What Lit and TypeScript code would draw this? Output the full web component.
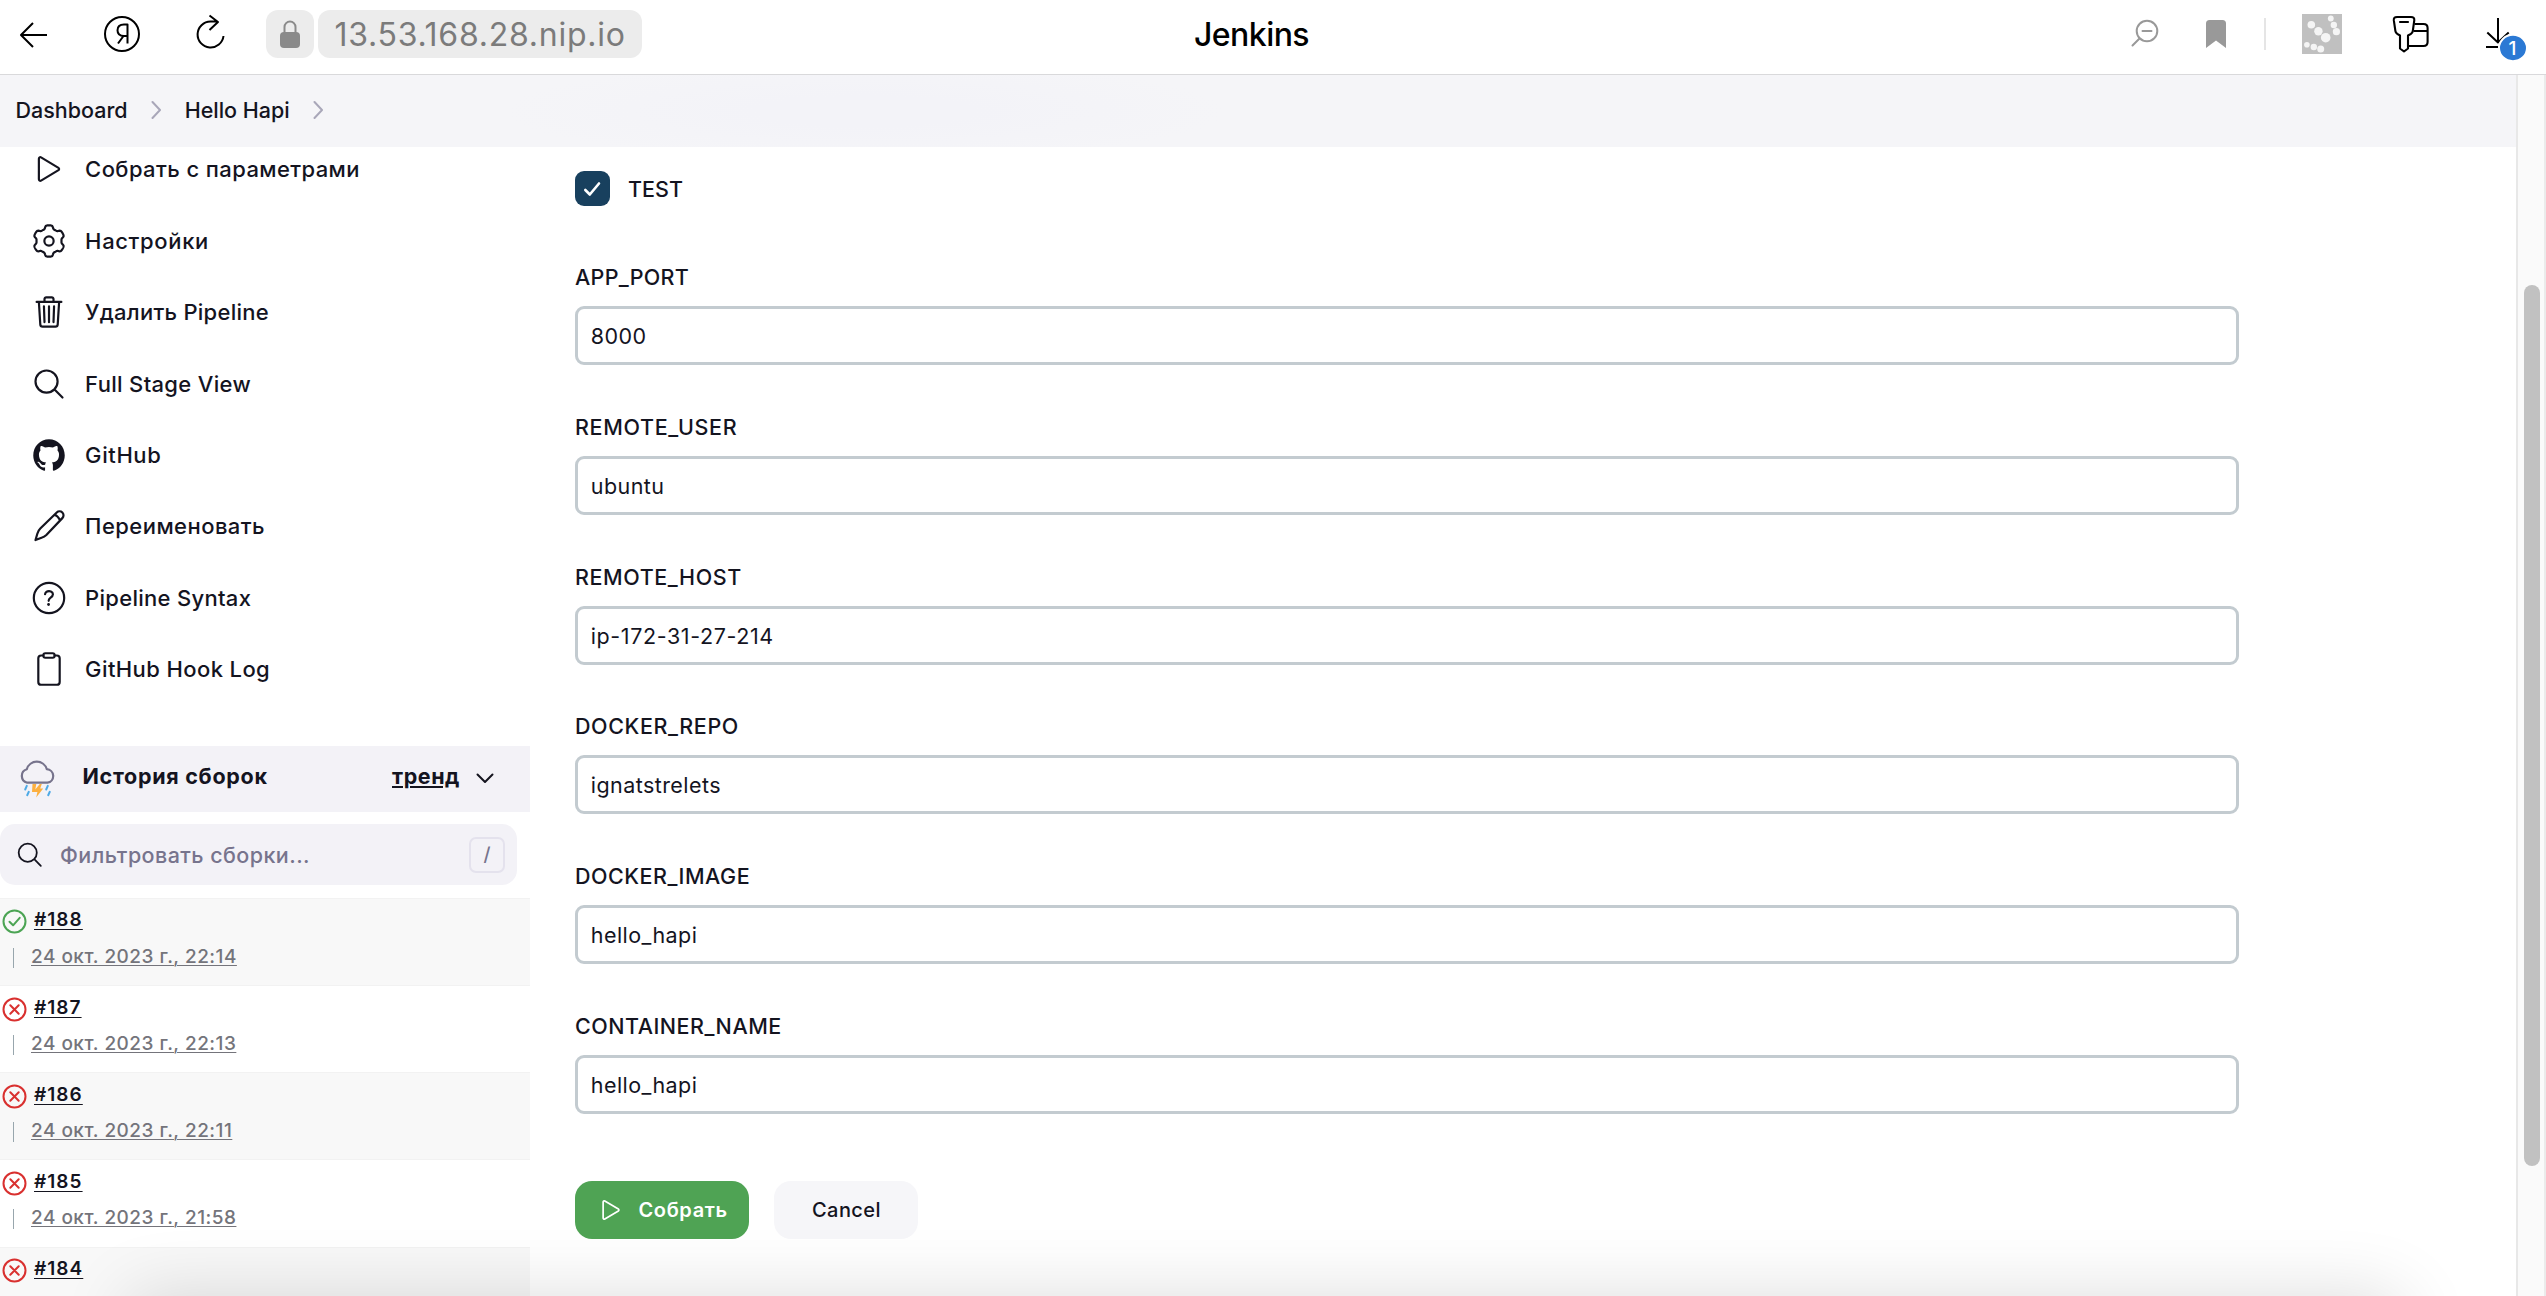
import { LitElement, html, css, svg, nothing, TemplateResult } from "lit";
import { customElement, property } from "lit/decorators.js";

/* ---------- icons ---------- */

/** Closed outline of a gear with six soft teeth. */
const gearOutline = (cx: number, cy: number, base: number, tooth: number): string => {
  const steps = 180;
  const points: string[] = [];
  for (let i = 0; i < steps; i++) {
    const a = (i / steps) * Math.PI * 2 - Math.PI / 2;
    const wave = Math.tanh(2.4 * Math.cos(6 * (a + Math.PI / 2)) + 0.3);
    const r = base + tooth * wave;
    points.push(`${(cx + r * Math.cos(a)).toFixed(2)} ${(cy + r * Math.sin(a)).toFixed(2)}`);
  }
  return `M${points.join("L")}Z`;
};

const playPath =
  "M112 111v290c0 17.44 17 28.52 31 20.16l247.9-148.37c12.12-7.25 12.12-26.33 0-33.58L143 90.84c-14-8.36-31 2.72-31 20.16z";

const ICONS: Record<string, TemplateResult> = {
  play: svg`<path d=${playPath} />`,
  gear: svg`<path d=${gearOutline(256, 256, 200, 23)} /><circle cx="256" cy="256" r="66" />`,
  trash: svg`<path d="M112 112l20 320c.95 18.49 14.4 32 32 32h184c17.67 0 30.87-13.51 32-32l20-320M80 112h352M192 112V72a23.93 23.93 0 0124-24h80a23.93 23.93 0 0124 24v40M256 176v224M184 176l8 224M328 176l-8 224" />`,
  search: svg`<path d="M221.09 64a157.09 157.09 0 10157.09 157.09A157.1 157.1 0 00221.09 64zM338.29 338.29L448 448" />`,
  github: svg`<path fill="currentColor" stroke="none" d="M256 32C132.3 32 32 134.9 32 261.7c0 101.5 64.2 187.5 153.2 217.9a17.56 17.56 0 003.8.4c8.3 0 11.5-6.1 11.5-11.4 0-5.5-.2-19.9-.3-39.1a102.4 102.4 0 01-22.6 2.7c-43.1 0-52.9-33.5-52.9-33.5-10.2-26.5-24.9-33.6-24.9-33.6-19.5-13.7-.1-14.1 1.4-14.1h.1c22.5 2 34.3 23.8 34.3 23.8 11.2 19.6 26.2 25.1 39.6 25.1a63 63 0 0025.6-6c2-14.8 7.8-24.9 14.2-30.7-49.7-5.8-102-25.5-102-113.5 0-25.1 8.7-45.6 23-61.6-2.3-5.8-10-29.2 2.2-60.8a18.64 18.64 0 015-.5c8.1 0 26.4 3.1 56.6 24.1a208.21 208.21 0 01112.2 0c30.2-21 48.5-24.1 56.6-24.1a18.64 18.64 0 015 .5c12.2 31.6 4.5 55 2.2 60.8 14.3 16.1 23 36.6 23 61.6 0 88.2-52.4 107.6-102.3 113.3 8 7.1 15.2 21.1 15.2 42.5 0 30.7-.3 55.5-.3 63 0 5.4 3.1 11.5 11.4 11.5a19.35 19.35 0 004-.4C415.9 449.2 480 363.1 480 261.7 480 134.9 379.7 32 256 32z" />`,
  pencil: svg`<path d="M64 456L90 366Q102 322 132 292L366 64a56 56 0 0180 80L218 384Q190 412 150 424ZM336 96Q384 112 414 174" />`,
  help: svg`<circle cx="256" cy="256" r="216" /><path d="M200 202.29s.84-17.5 19.57-32.57C230.68 160.77 244 158.18 256 158c10.93-.14 20.69 1.67 26.53 4.45 10 4.76 29.47 16.38 29.47 41.09 0 26-17 37.81-36.37 50.8S251 281.43 251 296" /><circle cx="250" cy="348" r="20" fill="currentColor" stroke="none" />`,
  clipboard: svg`<path d="M336 64h32a40 40 0 0140 40v336a40 40 0 01-40 40H144a40 40 0 01-40-40V104a40 40 0 0140-40h32" /><rect x="176" y="32" width="160" height="64" rx="28" />`,
};

@customElement("line-icon")
export class LineIcon extends LitElement {
  @property() name = "play";
  static styles = css`
    :host { display: block; width: 36px; height: 36px; flex: none; }
    svg { display: block; width: 100%; height: 100%; overflow: visible; }
  `;
  render() {
    return html`<svg viewBox="0 0 512 512" fill="none" stroke="currentColor" stroke-width="31"
      stroke-linecap="round" stroke-linejoin="round">${ICONS[this.name]}</svg>`;
  }
}

/* ---------- browser toolbar ---------- */

@customElement("browser-bar")
export class BrowserBar extends LitElement {
  static styles = css`
    :host { display: block; background: #fff; border-bottom: 1px solid #d9d9db; }
    .bar { display: flex; align-items: center; height: 74px; box-sizing: border-box; padding-bottom: 6px; }
    svg { display: block; flex: none; fill: none; stroke: #000; stroke-width: 2; stroke-linecap: round; stroke-linejoin: round; }
    .left { display: flex; align-items: center; width: 1194px; padding-left: 18px; box-sizing: border-box; }
    .back { width: 32px; height: 32px; margin-right: 52px; }
    .ya { width: 40px; height: 40px; margin-right: 50px; }
    .reload { width: 36px; height: 40px; margin-right: 38px; }
    .lock, .url { background: #ececec; border-radius: 12px; height: 48px; display: flex; align-items: center; justify-content: center; }
    .lock { width: 48px; margin-right: 4px; }
    .lock svg { width: 22px; height: 28px; stroke: #8a8a8a; margin-bottom: 1px; }
    .lock .fill { fill: #8a8a8a; stroke: none; }
    .url { width: 324px; font-size: 32px; letter-spacing: 0.74px; color: #7b7b7b; box-sizing: border-box; padding: 1px 0 0 0; }
    .title { flex: 1; font-size: 32px; letter-spacing: -0.55px; font-weight: 450; color: #000; padding-top: 1px; }
    .right { display: flex; align-items: center; padding-right: 16px; }
    .grey { stroke: #999; }
    .zoom { width: 28px; height: 30px; margin-right: 47px; }
    .mark { width: 20px; height: 28px; margin-right: 38px; fill: #999; stroke: none; }
    .sep { width: 2px; height: 32px; background: #e5e5e5; margin-right: 36px; }
    .tile { width: 40px; height: 40px; margin-right: 50px; stroke: none; background: #c0c0c0; fill: #f5f5f5; }
    .key { width: 38px; height: 40px; margin-right: 54px; stroke-width: 2.1; stroke-linecap: butt; }
    .down { width: 46px; height: 52px; margin-bottom: -8px; }
    .badge { fill: #2b79d4; stroke: #fff; }
    .count { fill: #fff; stroke: none; font: 500 19px Inter, sans-serif; text-anchor: middle; }
  `;
  render() {
    return html`<div class="bar">
      <div class="left">
        <svg class="back" viewBox="0 0 32 32"><path d="M29 17H3.500M15 5L3 17l12 12" stroke-linecap="butt" /></svg>
        <svg class="ya" viewBox="0 0 40 40"><circle cx="20" cy="20" r="17" />
          <path stroke-linecap="butt" stroke-width="2" d="M25.500 29.500V10.500h-3.500c-4 0-6.500 2-6.500 5.800 0 3.700 2.600 5.700 6.500 5.700h3.500M21.500 22l-5.500 7.500" /></svg>
        <svg class="reload" viewBox="0 0 36 40"><path stroke-linecap="butt" d="M31.500 22a13 13 0 1 1-13-14.500h7M17.500 1.500L26 8l-8.500 8" /></svg>
        <div class="lock"><svg viewBox="0 0 22 28"><rect class="fill" x="1" y="12" width="20" height="16" rx="4" /><path d="M5.500 13V7a5.500 5.500 0 0 1 11 0v6" /></svg></div>
        <div class="url">13.53.168.28.nip.io</div>
      </div>
      <div class="title">Jenkins</div>
      <div class="right">
        <svg class="zoom grey" viewBox="0 0 28 30"><circle cx="16" cy="12" r="10.300" /><path d="M11.500 12h9M8.500 19.500L1.500 26.500" /></svg>
        <svg class="mark" viewBox="0 0 20 28"><path d="M3.500 0h13Q20 0 20 3.500V28L10 20.500 0 28V3.500Q0 0 3.500 0z" /></svg>
        <div class="sep"></div>
        <svg class="tile" viewBox="0 0 40 40">
          <circle cx="9.300" cy="10.700" r="3.800" /><circle cx="16.400" cy="17.200" r="4.200" /><circle cx="23.700" cy="23.700" r="4.800" />
          <circle cx="28.800" cy="4.500" r="2.900" /><circle cx="31.800" cy="11" r="3.200" /><circle cx="34.400" cy="17.700" r="3.600" />
          <circle cx="4.900" cy="30.700" r="2.800" /><circle cx="11.800" cy="33" r="3.200" /><circle cx="18.700" cy="34.900" r="3.500" />
        </svg>
        <svg class="key" viewBox="0 0 38 40">
          <path d="M5 3H19Q22.500 3 22.300 6.200L20.800 17Q20.500 19 19 19.800L16 21.500V34.500L12 37.500 8 34.500V21.500L5.200 19.800Q3.700 19 3.400 17L1.800 6.200Q1.500 3 5 3zM7.200 8h9.600" />
          <path d="M22.500 10H31.500Q35.600 10 35.600 14V28Q35.600 32 31.500 32H17M21.500 17H35.600" />
        </svg>
        <svg class="down" viewBox="0 0 46 52"><path stroke-linecap="butt" d="M14 6V30M3.300 20.500L14 30.500 24.700 20.500M2 35H14" />
          <ellipse class="badge" cx="29" cy="36" rx="14" ry="13.200" /><text class="count" x="28.500" y="42.500">1</text></svg>
      </div>
    </div>`;
  }
}

/* ---------- sidebar ---------- */

interface Task { icon: string; label: string; tracking: number; }
const TASKS: Task[] = [
  { icon: "play", label: "Собрать с параметрами", tracking: 0.4 },
  { icon: "gear", label: "Настройки", tracking: 0.65 },
  { icon: "trash", label: "Удалить Pipeline", tracking: 0.26 },
  { icon: "search", label: "Full Stage View", tracking: 0.32 },
  { icon: "github", label: "GitHub", tracking: 0.6 },
  { icon: "pencil", label: "Переименовать", tracking: 0.45 },
  { icon: "help", label: "Pipeline Syntax", tracking: 0.29 },
  { icon: "clipboard", label: "GitHub Hook Log", tracking: 0.4 },
];

interface Build { id: string; date?: string; ok: boolean; }
const BUILDS: Build[] = [
  { id: "#188", date: "24 окт. 2023 г., 22:14", ok: true },
  { id: "#187", date: "24 окт. 2023 г., 22:13", ok: false },
  { id: "#186", date: "24 окт. 2023 г., 22:11", ok: false },
  { id: "#185", date: "24 окт. 2023 г., 21:58", ok: false },
  { id: "#184", ok: false },
];

@customElement("job-sidebar")
export class JobSidebar extends LitElement {
  static styles = css`
    :host { display: block; width: 530px; flex: none; }
    .tasks { display: flex; flex-direction: column; margin-top: -13.300px; }
    .task { display: flex; align-items: center; height: 71.400px; padding-left: 30.600px; gap: 18.500px; font-size: 22px; font-weight: 500; white-space: nowrap; }
    .head { display: flex; align-items: center; height: 66px; margin-top: 41px; padding: 0 36px 0 18px; background: #f3f2f7; box-sizing: border-box; font-size: 21.500px; font-weight: 700; }
    .weather { width: 38px; height: 42px; margin-right: 26.500px; flex: none; }
    .name { flex: 1; letter-spacing: 0.7px; padding-bottom: 5px; }
    .trend { letter-spacing: 0.55px; text-decoration: underline; text-decoration-thickness: 2px; text-underline-offset: 2px; padding-bottom: 5px; margin-right: 16px; }
    .chev { width: 18px; height: 12px; margin-bottom: 1px; }
    .filter { display: flex; align-items: center; width: 517px; height: 61px; margin-top: 12px; box-sizing: border-box; padding: 1px 12px 0 15px; border-radius: 15px; background: #f3f2f7; }
    .filter line-icon { width: 29.500px; height: 29.500px; margin-right: 15.500px; }
    .hint { flex: 1; font-size: 21.500px; font-weight: 500; letter-spacing: 0.43px; color: #77748d; }
    .slash { width: 36px; height: 36px; box-sizing: border-box; border: 2px solid #e4e2ed; border-radius: 7px; display: flex; align-items: center; justify-content: center; color: #77748d; font-size: 19px; font-weight: 500; }
    .builds { margin-top: 13px; }
    .build { height: 87.200px; box-sizing: border-box; border-top: 1px solid #f2f2f2; padding: 8px 0 0 2px; }
    .build:nth-child(odd) { background: #f8f8f8; }
    .line { display: flex; align-items: center; height: 28px; }
    .status { width: 25px; height: 25px; margin: 2px 7px 0 0; }
    .ok { color: #4ca454; }
    .bad { color: #d9302f; }
    .id { font-size: 19px; font-weight: 600; letter-spacing: 1.050px; text-decoration: underline; text-decoration-thickness: 1px; text-underline-offset: 2.500px; padding-bottom: 2px; }
    .second { margin-top: 8px; height: 27px; padding-left: 10.500px; }
    .tick { width: 1px; height: 20px; background: #98a6ad; margin: 3px 17.500px 0 0; }
    .date { font-size: 19px; font-weight: 500; letter-spacing: 0.480px; color: #74747b; text-decoration: underline; text-decoration-thickness: 1px; text-underline-offset: 1.500px; }
    svg { display: block; fill: none; stroke: currentColor; stroke-width: 2; stroke-linecap: round; stroke-linejoin: round; }
    .cloud { stroke: #76738c; stroke-width: 2.200; }
    .bolt { fill: #fcb040; stroke: none; }
    .rain { stroke: #4eaae6; stroke-width: 2; }
  `;
  render() {
    return html`
      <div class="tasks">${TASKS.map((t) => html`<div class="task"><line-icon name=${t.icon}></line-icon><span style="letter-spacing:${t.tracking}px">${t.label}</span></div>`)}</div>
      <div class="head">
        <svg class="weather" viewBox="0 0 38 42">
          <path class="cloud" d="M9.200 24.700A7 7 0 0 1 8.800 11.200 10.400 10.400 0 0 1 28.800 11.200 6.800 6.800 0 0 1 29.500 24.700Z" />
          <path class="bolt" d="M14.500 26h3.800l-1 5.500 4.500-5.500h2l-1.600 4.500h3L18.200 39.500l1.200-5.500h-5.400z" />
          <path class="rain" d="M8.800 27.800l-1.600 3.700M10.800 33.800l-1.600 3.400M29.800 27.800l-1.600 3.700M31.800 33.800l-1.600 3.400" />
        </svg>
        <span class="name">История сборок</span>
        <span class="trend">тренд</span>
        <svg class="chev" viewBox="0 0 18 12"><path d="M1.500 2.500L9 10l7.500-7.500" /></svg>
      </div>
      <div class="filter"><line-icon name="search"></line-icon><span class="hint">Фильтровать сборки...</span><span class="slash">/</span></div>
      <div class="builds">${BUILDS.map((b) => html`<div class="build">
        <div class="line">
          <svg class="status ${b.ok ? "ok" : "bad"}" viewBox="0 0 25 25"><circle cx="12.500" cy="12.500" r="11" />
            <path d=${b.ok ? "M7.500 12.700l3.600 3.600 6.600-7.500" : "M8.300 8.300l8.400 8.400M16.700 8.300l-8.400 8.400"} /></svg>
          <span class="id">${b.id}</span>
        </div>
        ${b.date ? html`<div class="line second"><span class="tick"></span><span class="date">${b.date}</span></div>` : nothing}
      </div>`)}</div>`;
  }
}

/* ---------- parameters form ---------- */

interface Param { label: string; value: string; tracking: number; }
const PARAMS: Param[] = [
  { label: "APP_PORT", value: "8000", tracking: 0.3 },
  { label: "REMOTE_USER", value: "ubuntu", tracking: 0.65 },
  { label: "REMOTE_HOST", value: "ip-172-31-27-214", tracking: 0.58 },
  { label: "DOCKER_REPO", value: "ignatstrelets", tracking: 0.6 },
  { label: "DOCKER_IMAGE", value: "hello_hapi", tracking: 0.5 },
  { label: "CONTAINER_NAME", value: "hello_hapi", tracking: 0.5 },
];

@customElement("build-form")
export class BuildForm extends LitElement {
  static styles = css`
    :host { display: block; flex: 1; box-sizing: border-box; padding: 24px 0 0 45px; font-size: 21.500px; }
    .check { display: flex; align-items: center; gap: 18px; height: 35px; margin-bottom: 58px; font-weight: 500; }
    .box { width: 35px; height: 35px; border-radius: 9px; background: #18405e; color: #fff; }
    svg { display: block; fill: none; stroke: currentColor; stroke-width: 2.600; stroke-linecap: round; stroke-linejoin: round; }
    .param { margin-bottom: 48.800px; }
    .label { line-height: 26px; margin-bottom: 16px; font-weight: 500; }
    .field { display: flex; align-items: center; width: 1664px; height: 59px; box-sizing: border-box; border: 3px solid #c3cbd0; border-radius: 9px; padding: 1px 0 0 12.800px; letter-spacing: 0.430px; }
    .actions { display: flex; gap: 25px; margin-top: 67px; font-size: 20px; }
    .btn { display: flex; align-items: center; height: 58px; border-radius: 17px; box-sizing: border-box; padding-top: 1px; }
    .go { width: 174px; background: #4fa354; color: #fff; padding-left: 22px; gap: 13.500px; font-weight: 600; letter-spacing: 0.620px; }
    .go line-icon { width: 28px; height: 28px; margin-bottom: 1px; }
    .cancel { width: 144px; justify-content: center; background: #f6f6f9; font-weight: 500; letter-spacing: 0.430px; padding-left: 1px; }
  `;
  render() {
    return html`
      <div class="check"><div class="box"><svg viewBox="0 0 35 35"><path d="M10.300 19l4.500 4.500L24 12.500" /></svg></div><span>TEST</span></div>
      ${PARAMS.map((p) => html`<div class="param"><div class="label" style="letter-spacing:${p.tracking}px">${p.label}</div><div class="field" style=${p.value.startsWith("ip-") ? "letter-spacing:0.6px" : ""}>${p.value}</div></div>`)}
      <div class="actions">
        <div class="btn go"><line-icon name="play"></line-icon><span>Собрать</span></div>
        <div class="btn cancel">Cancel</div>
      </div>`;
  }
}

/* ---------- page ---------- */

@customElement("app-root")
export class AppRoot extends LitElement {
  static styles = css`
    :host { display: block; position: relative; height: 1296px; overflow: hidden; background: #fff; color: #14141f; font-family: Inter, "Liberation Sans", sans-serif; }
    .view { display: flex; height: 1221px; }
    .page { flex: 1; min-width: 0; height: 100%; overflow: hidden; }
    .crumbs { display: flex; align-items: center; height: 72px; box-sizing: border-box; padding: 0 0 2px 15.500px; font-size: 21.500px; font-weight: 500; background: radial-gradient(ellipse 360px 50px at 865px 36px, #f3f3f8 30%, #f5f5f8 100%); }
    .crumbs svg { display: block; width: 10px; height: 20px; margin: 0 24px 0 23px; fill: none; stroke: #a9a7b9; stroke-width: 2; stroke-linecap: round; stroke-linejoin: round; }
    .body { display: flex; height: 1149px; }
    .track { width: 30px; box-sizing: border-box; border-left: 2px solid #e8e8e8; border-right: 2px solid #ebebeb; background: #fafafa; padding: 210px 0 0 6px; }
    .thumb { width: 16px; height: 881px; border-radius: 8px; background: #c1c1c1; }
    .shade { position: absolute; inset: 1150px 30px 0 0; overflow: hidden; pointer-events: none; }
    .cast { position: absolute; left: 130px; right: 115px; top: 146px; height: 200px; box-shadow: 0 0 72px rgba(0, 0, 0, 0.140); }
  `;
  render() {
    const chevron = html`<svg viewBox="0 0 10 20"><path d="M1.500 2L9 10l-7.500 8" /></svg>`;
    return html`
      <browser-bar></browser-bar>
      <div class="view">
        <div class="page">
          <div class="crumbs"><span>Dashboard</span>${chevron}<span>Hello Hapi</span>${chevron}</div>
          <div class="body"><job-sidebar></job-sidebar><build-form></build-form></div>
        </div>
        <div class="track"><div class="thumb"></div></div>
      </div>
      <div class="shade"><div class="cast"></div></div>`;
  }
}
